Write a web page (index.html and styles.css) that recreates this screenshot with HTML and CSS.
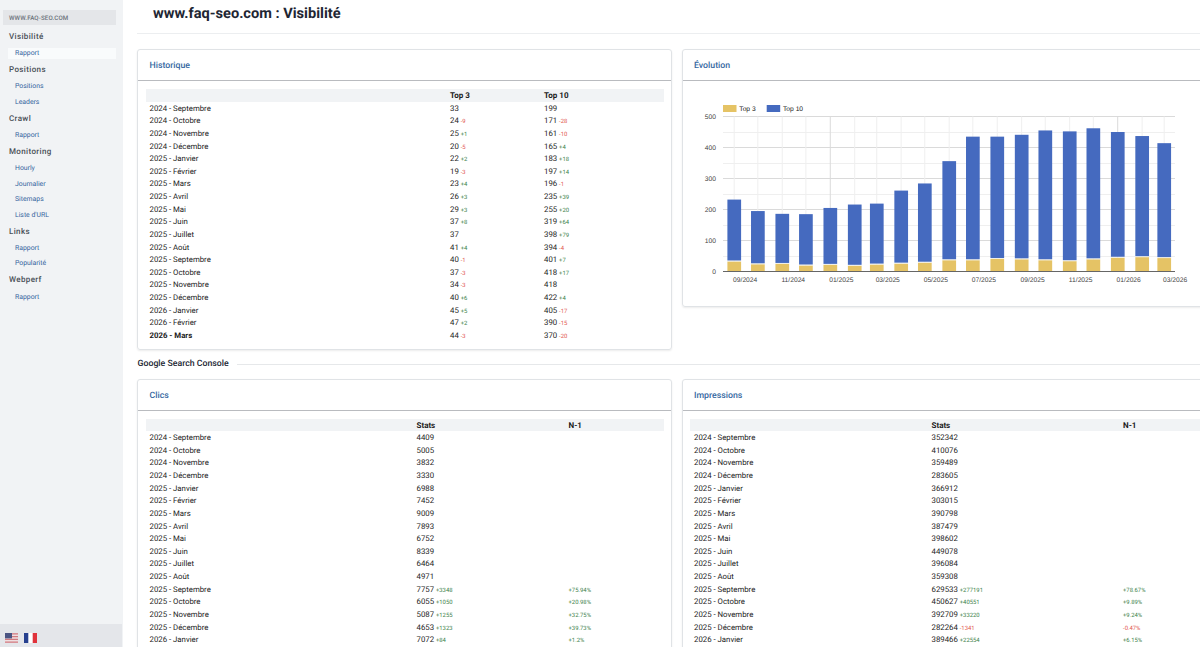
FILE: index.html
```
<!DOCTYPE html>
<html lang="fr">

<head>
    <meta charset="UTF-8">
    <meta name="viewport" content="width=device-width, initial-scale=1.0">
    <title>www.faq-seo.com : Visibilité</title>
    <link rel="stylesheet" href="styles.css">
</head>

<body>

    <nav id="sidebar">
        <div class="site">WWW.FAQ-SEO.COM</div>
        <h6>Visibilité</h6>
        <a class="active">Rapport</a>
        <h6>Positions</h6>
        <a>Positions</a>
        <a>Leaders</a>
        <h6>Crawl</h6>
        <a>Rapport</a>
        <h6>Monitoring</h6>
        <a>Hourly</a>
        <a>Journalier</a>
        <a>Sitemaps</a>
        <a>Liste d'URL</a>
        <h6>Links</h6>
        <a>Rapport</a>
        <a>Popularité</a>
        <h6>Webperf</h6>
        <a>Rapport</a>

        <div class="langs">
            <svg class="flag" viewBox="0 0 13 10">
                <rect width="13" height="10" fill="#f0dfe1"/>
                <path d="M0 .8h13M0 3.6h13M0 6.4h13M0 9.2h13" stroke="#cf7a80" stroke-width="1.3"/>
                <rect width="7" height="5.4" fill="#4b5583"/>
            </svg>
            <svg class="flag" viewBox="0 0 13 10">
                <rect width="13" height="10" fill="#fff"/>
                <rect width="4.3" height="10" fill="#26408f"/>
                <rect x="8.7" width="4.3" height="10" fill="#e0333c"/>
            </svg>
        </div>
    </nav>

    <main id="content">
        <h1>www.faq-seo.com : Visibilité</h1>

        <div class="row">
            <section class="card">
                <h2>Historique</h2>
                <table class="stats history">
                    <thead><tr><th></th><th>Top 3</th><th>Top 10</th></tr></thead>
                    <tbody id="history"></tbody>
                </table>
            </section>
            <section class="card">
                <h2>Évolution</h2>
                <svg id="chart" width="512" height="209"></svg>
            </section>
        </div>

        <div class="divider">Google Search Console</div>

        <div class="row">
            <section class="card">
                <h2>Clics</h2>
                <table class="stats clicks">
                    <thead><tr><th></th><th>Stats</th><th>N-1</th></tr></thead>
                    <tbody id="clicks"></tbody>
                </table>
            </section>
            <section class="card">
                <h2>Impressions</h2>
                <table class="stats impressions">
                    <thead><tr><th></th><th>Stats</th><th>N-1</th></tr></thead>
                    <tbody id="impressions"></tbody>
                </table>
            </section>
        </div>
    </main>

    <script>
        const names = ['Janvier', 'Février', 'Mars', 'Avril', 'Mai', 'Juin', 'Juillet', 'Août', 'Septembre', 'Octobre', 'Novembre', 'Décembre'];
        const top3 = [33, 24, 25, 20, 22, 19, 23, 26, 29, 37, 37, 41, 40, 37, 34, 40, 45, 47, 44];
        const top10 = [199, 171, 161, 165, 183, 197, 196, 235, 255, 319, 398, 394, 401, 418, 418, 422, 405, 390, 370];
        const clicks = [4409, 5005, 3832, 3330, 6988, 7452, 9009, 7893, 6752, 8339, 6464, 4971, 7757, 6055, 5087, 4653, 7072];
        const clicksPct = ['+75.94%', '+20.98%', '+32.75%', '+39.73%', '+1.2%'];
        const impressions = [352342, 410076, 359489, 283605, 366912, 303015, 390798, 387479, 398602, 449078, 396084, 359308, 629533, 450627, 392709, 282264, 389466];
        const impressionsPct = ['+78.67%', '+9.89%', '+9.24%', '-0.47%', '+6.15%'];

        // month 0 = septembre 2024
        function monthLabel(i) {
            return `${2024 + Math.floor((i + 8) / 12)} - ${names[(i + 8) % 12]}`;
        }

        function delta(value) {
            if (!value) return '';
            const text = typeof value === 'number' && value > 0 ? '+' + value : String(value);
            return `<small class="${text[0] === '-' ? 'down' : 'up'}">${text}</small>`;
        }

        document.getElementById('history').innerHTML = top3.map((v, i) => `<tr>
            <td>${monthLabel(i)}</td>
            <td>${v} ${delta(i && v - top3[i - 1])}</td>
            <td>${top10[i]} ${delta(i && top10[i] - top10[i - 1])}</td>
        </tr>`).join('');

        function fillSearchConsole(id, values, pct) {
            document.getElementById(id).innerHTML = values.map((v, i) => `<tr>
                <td>${monthLabel(i)}</td>
                <td>${v} ${delta(i >= 12 && v - values[i - 12])}</td>
                <td>${delta(pct[i - 12])}</td>
            </tr>`).join('');
        }
        fillSearchConsole('clicks', clicks, clicksPct);
        fillSearchConsole('impressions', impressions, impressionsPct);

        function drawChart() {
            const left = 33, right = 485, bottom = 181.5, scale = 0.31;
            const start = Date.UTC(2024, 8, 1);
            const x = i => 44.2 + (Date.UTC(2024, 8 + i, 1) - start) / 86400000 * 0.7875;
            let grid = '', bars = '', labels = '';

            for (let v = 0; v <= 500; v += 50) {
                const y = Math.round(bottom - v * scale - 0.5) + 0.5;
                grid += `<line class="${v % 100 ? 'minor' : 'major'}" x1="${left}" x2="${right}" y1="${y}" y2="${y}"/>`;
                if (v % 100 === 0) labels += `<text class="axis" x="26" y="${y + 2}" text-anchor="end">${v}</text>`;
            }
            top3.forEach((v, i) => {
                const cx = x(i);
                const h3 = v * scale, h10 = top10[i] * scale;
                grid += `<line class="${(i + 8) % 12 ? 'minor' : 'major'}" x1="${cx}" x2="${cx}" y1="26.5" y2="${bottom}"/>`;
                bars += `<rect class="top3" x="${cx - 6.8}" y="${bottom - h3 + 0.2}" width="13.7" height="${h3 - 0.2}"/>`;
                bars += `<rect class="gap" x="${cx - 6.8}" y="${bottom - h3 - 0.8}" width="13.7" height="1"/>`;
                bars += `<rect class="top10" x="${cx - 6.8}" y="${bottom - h3 - h10}" width="13.7" height="${h10 - 0.8}"/>`;
                if (i % 2 === 0) {
                    const month = String((i + 8) % 12 + 1).padStart(2, '0');
                    labels += `<text class="axis" x="${cx + 11}" y="191.6" text-anchor="middle">${month}/${2024 + Math.floor((i + 8) / 12)}</text>`;
                }
            });

            document.getElementById('chart').innerHTML = `
                <rect class="top3" x="33" y="15" width="13.5" height="7"/>
                <text class="legend" x="49.3" y="21">Top 3</text>
                <rect class="top10" x="76.7" y="15" width="13.5" height="7"/>
                <text class="legend" x="93" y="21">Top 10</text>
                ${grid}${bars}
                <line class="base" x1="${left}" x2="${right}" y1="${bottom}" y2="${bottom}"/>
                ${labels}`;
        }
        drawChart();
    </script>

</body>

</html>
```
FILE: styles.css
```
* {
    box-sizing: border-box;
}

body {
    display: flex;
    margin: 0;
    height: 647px;
    overflow: hidden;
    font-family: Roboto, sans-serif;
    font-size: 7.8px;
    color: #212529;
    background: #fff;
    text-rendering: geometricPrecision;
}

#sidebar {
    display: flex;
    flex-direction: column;
    flex: none;
    width: 122.5px;
    height: 647px;
    padding-top: 9.5px;
    background: #f1f3f5;
}

.site {
    height: 15.5px;
    margin: 0 6.5px 3px 3px;
    padding-left: 6px;
    line-height: 16.5px;
    font-size: 6.2px;
    font-weight: 500;
    letter-spacing: 0.12px;
    color: #6c737b;
    background: #e4e6e9;
}

#sidebar h6 {
    margin: 0;
    padding-left: 9px;
    height: 17.7px;
    line-height: 18.3px;
    font-size: 8px;
    font-weight: 500;
    letter-spacing: 0.37px;
    color: #495057;
}

#sidebar a {
    height: 10.5px;
    margin: 2.5px 6.5px 2.5px 8px;
    padding-left: 7px;
    line-height: 11px;
    font-size: 6.85px;
    color: #34639d;
}

#sidebar a.active {
    background: #f9fbfc;
}

.langs {
    display: flex;
    gap: 5.5px;
    height: 23px;
    margin-top: auto;
    margin-right: 1px;
    padding: 9px 0 0 5px;
    background: #e4e6ea;
}

.flag {
    width: 13px;
    height: 10px;
}

#content {
    flex: none;
    width: 1093.5px;
    padding-left: 14.5px;
}

h1 {
    height: 33.5px;
    margin: 0 0 15.5px;
    padding-left: 16px;
    border-bottom: 1px solid #eceef0;
    line-height: 26px;
    font-size: 14.6px;
    font-weight: 700;
    color: #212532;
}

.row {
    display: flex;
    align-items: flex-start;
    gap: 10px;
}

.card {
    flex: none;
    width: 534.5px;
    padding-bottom: 7px;
    border: 1px solid #e0e3e6;
    border-radius: 3px;
    box-shadow: 0 1px 2px rgba(0, 0, 0, 0.08);
}

.card h2 {
    height: 31px;
    margin: 0 0 8px;
    padding-left: 11.5px;
    border-bottom: 1px solid #b9bbbf;
    line-height: 33px;
    font-size: 8.75px;
    font-weight: 500;
    color: #34679f;
}

.stats {
    display: block;
    width: 518px;
    margin: 0 7.5px;
}

.stats thead,
.stats tbody {
    display: block;
}

.stats tr {
    display: grid;
    height: 12.63px;
}

.stats th,
.stats td {
    padding: 0 0 0 4px;
    height: 12.63px;
    line-height: 13.2px;
    text-align: left;
    color: #1a1a1a;
}

.stats th {
    font-size: 8px;
    font-weight: 700;
    background: #f1f3f5;
}

.history tr {
    grid-template-columns: 300.5px 94px 1fr;
}

.clicks tr {
    grid-template-columns: 267px 152px 1fr;
}

.impressions tr {
    grid-template-columns: 237.5px 191.5px 1fr;
}

.history tbody tr:last-child td:first-child {
    font-weight: 700;
}

small {
    font-size: 5.9px;
    line-height: 1;
}

.up {
    color: #3c7f4a;
}

.down {
    color: #e2564e;
}

.divider {
    display: flex;
    align-items: center;
    gap: 8px;
    height: 29px;
    padding-left: 0.5px;
    line-height: 12px;
    font-size: 8.75px;
    font-weight: 500;
    color: #212532;
}

.divider::after {
    content: "";
    flex: 1;
    border-top: 1px solid #e6e8ea;
}

#chart {
    display: block;
    margin: 9px 0 0 7.5px;
}

.major {
    stroke: #dadada;
}

.minor {
    stroke: #efefef;
}

.base {
    stroke: #666;
}

.top3 {
    fill: #e5c365;
}

.top10 {
    fill: #456abf;
}

.gap {
    fill: #f1efe4;
}

.axis,
.legend {
    font-family: "Liberation Sans", Arial, sans-serif;
    font-size: 6.7px;
    fill: #444;
}

.legend {
    fill: #222;
}
```
